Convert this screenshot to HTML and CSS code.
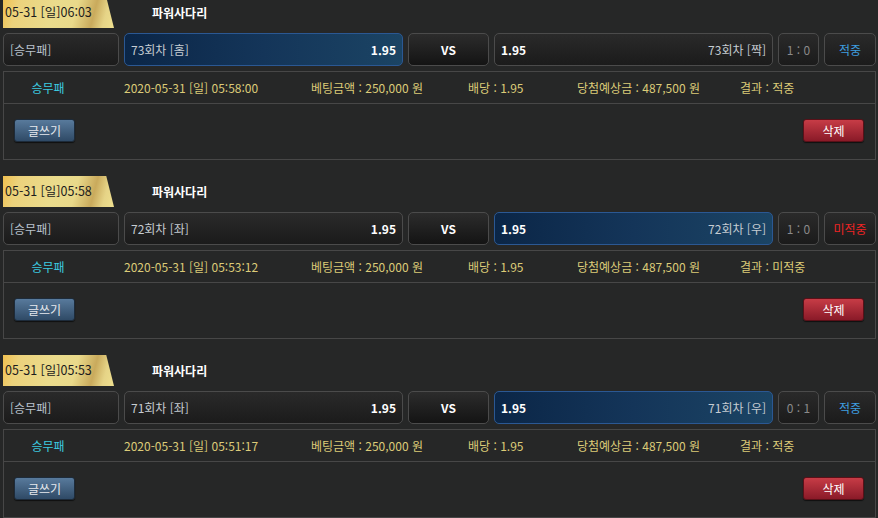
FILE: index.html
```html
<!DOCTYPE html>
<html lang="ko">
<head>
<meta charset="utf-8">
<title>베팅내역</title>
<link rel="stylesheet" href="styles.css">
</head>
<body>
<div class="list">

  <section class="bet">
    <div class="bet-head">
      <div class="tab">05-31 [일]06:03</div>
      <div class="game">파워사다리</div>
    </div>
    <div class="picks">
      <div class="cell label">[승무패]</div>
      <div class="cell side sel"><span>73회차 [홈]</span><b>1.95</b></div>
      <div class="cell vs">VS</div>
      <div class="cell side"><b>1.95</b><span>73회차 [짝]</span></div>
      <div class="cell score">1 : 0</div>
      <div class="cell result win">적중</div>
    </div>
    <div class="panel">
      <div class="info">
        <span class="type">승무패</span>
        <span>2020-05-31 [일] 05:58:00</span>
        <span>베팅금액 : 250,000 원</span>
        <span>배당 : 1.95</span>
        <span>당첨예상금 : 487,500 원</span>
        <span>결과 : 적중</span>
      </div>
      <div class="actions">
        <button class="btn write">글쓰기</button>
        <button class="btn del">삭제</button>
      </div>
    </div>
  </section>

  <section class="bet">
    <div class="bet-head">
      <div class="tab">05-31 [일]05:58</div>
      <div class="game">파워사다리</div>
    </div>
    <div class="picks">
      <div class="cell label">[승무패]</div>
      <div class="cell side"><span>72회차 [좌]</span><b>1.95</b></div>
      <div class="cell vs">VS</div>
      <div class="cell side sel"><b>1.95</b><span>72회차 [우]</span></div>
      <div class="cell score">1 : 0</div>
      <div class="cell result lose">미적중</div>
    </div>
    <div class="panel">
      <div class="info">
        <span class="type">승무패</span>
        <span>2020-05-31 [일] 05:53:12</span>
        <span>베팅금액 : 250,000 원</span>
        <span>배당 : 1.95</span>
        <span>당첨예상금 : 487,500 원</span>
        <span>결과 : 미적중</span>
      </div>
      <div class="actions">
        <button class="btn write">글쓰기</button>
        <button class="btn del">삭제</button>
      </div>
    </div>
  </section>

  <section class="bet">
    <div class="bet-head">
      <div class="tab">05-31 [일]05:53</div>
      <div class="game">파워사다리</div>
    </div>
    <div class="picks">
      <div class="cell label">[승무패]</div>
      <div class="cell side"><span>71회차 [좌]</span><b>1.95</b></div>
      <div class="cell vs">VS</div>
      <div class="cell side sel"><b>1.95</b><span>71회차 [우]</span></div>
      <div class="cell score">0 : 1</div>
      <div class="cell result win">적중</div>
    </div>
    <div class="panel">
      <div class="info">
        <span class="type">승무패</span>
        <span>2020-05-31 [일] 05:51:17</span>
        <span>베팅금액 : 250,000 원</span>
        <span>배당 : 1.95</span>
        <span>당첨예상금 : 487,500 원</span>
        <span>결과 : 적중</span>
      </div>
      <div class="actions">
        <button class="btn write">글쓰기</button>
        <button class="btn del">삭제</button>
      </div>
    </div>
  </section>

</div>
</body>
</html>
```

FILE: styles.css
```css
html, body {
  margin: 0;
  padding: 0;
  background: #262727;
  font-family: "Noto Sans CJK KR", "Noto Sans", sans-serif;
  font-size: 12px;
  line-height: 1;
  overflow: hidden;
}

.list {
  padding: 0 2px 0 3px;
  margin-top: -3px;
}

.bet {
  margin-bottom: 16px;
}

.bet-head {
  display: flex;
  align-items: center;
  height: 31px;
}

.tab {
  width: 111px;
  height: 31px;
  box-sizing: border-box;
  padding-left: 2px;
  display: flex;
  align-items: center;
  color: #1c1c1c;
  font-size: 12.5px;
  background: linear-gradient(105deg, #f0c050 0%, #ecd27c 14%, #eadb8c 45%, #e9d98a 64%, #c9aa5c 80%, #e6d487 90%, #efe08f 100%);
  clip-path: polygon(0 0, 93% 0, 100% 100%, 0 100%);
}

.game {
  margin-left: 38px;
  color: #ffffff;
  font-weight: bold;
}

.picks {
  margin-top: 5px;
  display: grid;
  grid-template-columns: 116px 279px 81px 279px 41px 1fr;
  column-gap: 5px;
  height: 33px;
}

.cell {
  box-sizing: border-box;
  border: 1px solid #4b4b4b;
  border-radius: 5px;
  background: linear-gradient(#2a2a2a, #1b1b1b);
  display: flex;
  align-items: center;
  color: #c6ccd2;
}

.label {
  padding-left: 6px;
  color: #b9c2cc;
}

.side {
  justify-content: space-between;
  padding: 0 6px;
}

.side b {
  color: #ffffff;
  font-weight: bold;
}

.side.sel {
  border-color: #2b5893;
  background: linear-gradient(90deg, #0b2647 0%, #143559 50%, #1b4464 100%);
}

.vs {
  justify-content: center;
  color: #ffffff;
  font-weight: bold;
  background: linear-gradient(#2c2c2c, #141414);
}

.score {
  justify-content: center;
  color: #8a8a8a;
}

.result {
  justify-content: center;
}

.result.win {
  color: #3e9fe0;
}

.result.lose {
  color: #ee2424;
}

.panel {
  margin-top: 5px;
  border: 1px solid #474747;
}

.info {
  display: grid;
  grid-template-columns: 120px 187px 157px 109px 163px 1fr;
  align-items: center;
  height: 31px;
  border-bottom: 1px solid #474747;
  color: #dccb78;
}

.info .type {
  color: #3ccbe0;
  text-align: center;
  padding-right: 32px;
}

.actions {
  display: flex;
  justify-content: space-between;
  align-items: flex-start;
  height: 55px;
  box-sizing: border-box;
  padding: 15px 11px 0 10px;
}

.btn {
  width: 61px;
  height: 23px;
  border-radius: 3px;
  font-family: inherit;
  font-size: 12px;
  padding: 0;
  cursor: pointer;
  box-shadow: 0 1px 1px rgba(0, 0, 0, 0.6);
}

.write {
  color: #e6e9ee;
  border: 1px solid #1d2b3a;
  background: linear-gradient(#587a9c, #2f4a66);
}

.del {
  color: #ffffff;
  border: 1px solid #5a1018;
  background: linear-gradient(#c73c46, #8a1a28);
}
```
